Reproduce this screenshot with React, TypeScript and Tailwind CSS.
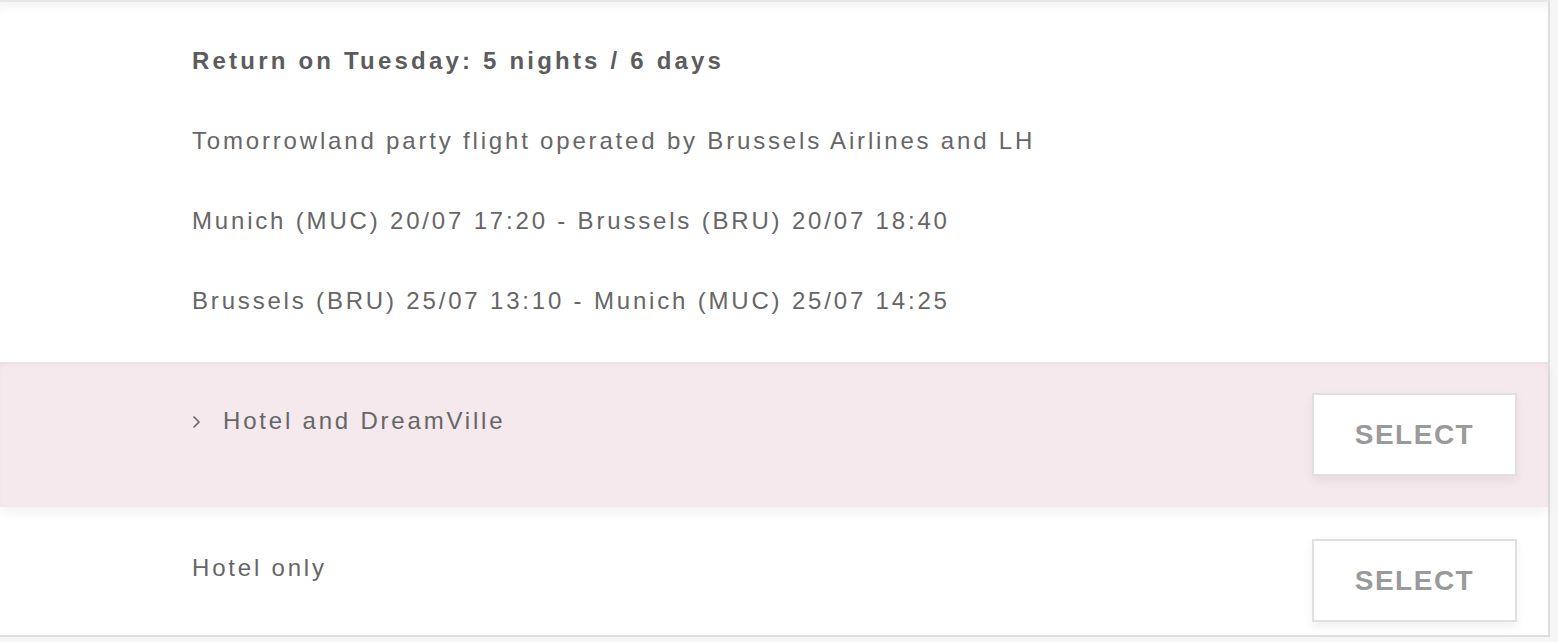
import React from "react";

const font = "font-['Liberation_Sans',Arial,Helvetica,sans-serif]";

function SelectButton() {
  return (
    <button
      className={`w-[205px] h-[83px] shrink-0 bg-white border-2 border-[#e0e0e0] shadow-[0_5px_10px_rgba(0,0,0,0.06)] text-[28px] font-bold tracking-[1.5px] text-[#9a9a9a] ${font}`}
    >
      SELECT
    </button>
  );
}

export default function App() {
  const lines = [
    "Tomorrowland party flight operated by Brussels Airlines and LH",
    "Munich (MUC) 20/07 17:20 - Brussels (BRU) 20/07 18:40",
    "Brussels (BRU) 25/07 13:10 - Munich (MUC) 25/07 14:25",
  ];

  return (
    <div className={`w-full h-[642px] bg-[#f6f6f6] ${font}`}>
      <div className="w-[1550px] bg-white border-t-2 border-t-[#e8e8e8] border-r-2 border-b-2 border-r-[#dedede] border-b-[#dedede]">
        {/* flight details */}
        <div className="pl-[192px] pt-[19px] pb-[21px] shadow-[inset_0_10px_12px_-8px_rgba(0,0,0,0.07)]">
          <div className="h-[80px] flex items-center text-[24px] font-bold tracking-[3.2px] text-[#5c5c5c]">
            Return on Tuesday: 5 nights / 6 days
          </div>
          {lines.map((l) => (
            <div key={l} className="h-[80px] flex items-center text-[24px] tracking-[2.82px] text-[#666]">
              {l}
            </div>
          ))}
        </div>

        {/* hotel + dreamville */}
        <div className="relative z-10 flex items-start justify-between pl-[192px] pr-[31px] py-[31px] bg-[#f5e9ee] shadow-[inset_0_4px_6px_-2px_rgba(0,0,0,0.05),0_6px_12px_rgba(0,0,0,0.05)]">
          <div className="h-[56px] flex items-center text-[24px] tracking-[2.8px] text-[#666]">
            <svg width="9" height="14" viewBox="0 0 9 14" className="mr-[22px] mt-[2px]">
              <path d="M1.5 1.5 L7 7 L1.5 12.5" fill="none" stroke="#666" strokeWidth="1.6" />
            </svg>
            Hotel and DreamVille
          </div>
          <SelectButton />
        </div>

        {/* hotel only */}
        <div className="flex items-start justify-between pl-[192px] pr-[31px] pt-[32px] pb-[13px]">
          <div className="h-[58px] flex items-center text-[24px] tracking-[2.8px] text-[#666]">
            Hotel only
          </div>
          <SelectButton />
        </div>
      </div>
    </div>
  );
}
